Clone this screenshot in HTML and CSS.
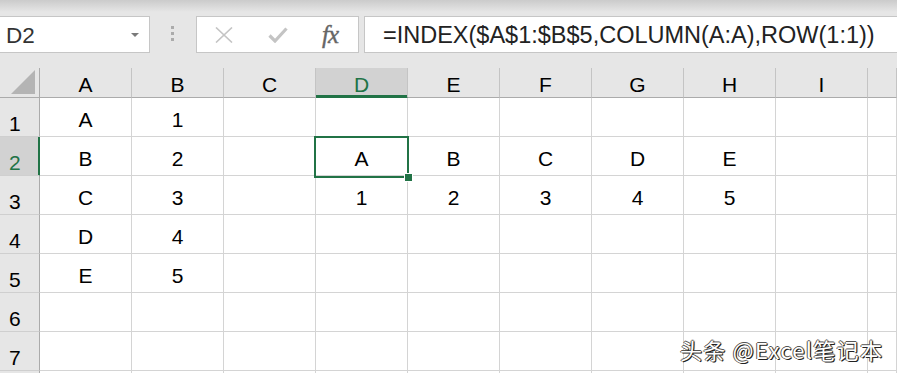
FILE: index.html
```
<!DOCTYPE html>
<html lang="zh-CN">
<head>
    <meta charset="UTF-8">
    <title>Excel</title>
    <link rel="stylesheet" href="styles.css">
</head>
<body>
    <div class="bar">
        <div class="namebox">
            <span>D2</span>
            <svg class="drop" width="8" height="5" viewBox="0 0 8 5"><path d="M0 0H8L4 4Z" fill="#7a7a7a"/></svg>
        </div>
        <div class="grip"><i></i><i></i><i></i></div>
        <div class="fbtns">
            <svg class="ico-x" width="18" height="16" viewBox="0 0 18 16"><path d="M1 0.5L17 15.5M17 0.5L1 15.5" stroke="#c4c4c4" stroke-width="1.6" fill="none"/></svg>
            <svg class="ico-ok" width="20" height="16" viewBox="0 0 20 16"><path d="M1.5 8.5L7 14L18.5 1.5" stroke="#c4c4c4" stroke-width="3.2" fill="none"/></svg>
            <span class="fx">fx</span>
        </div>
        <div class="formula">=INDEX($A$1:$B$5,COLUMN(A:A),ROW(1:1))</div>
    </div>

    <div class="sheet">
        <div class="row head">
            <div class="corner"><svg width="24" height="24" viewBox="0 0 24 24"><path d="M24 0V24H0Z" fill="#b4b4b4"/></svg></div>
            <div class="ch">A</div><div class="ch">B</div><div class="ch">C</div>
            <div class="ch on">D</div><div class="ch">E</div><div class="ch">F</div>
            <div class="ch">G</div><div class="ch">H</div><div class="ch">I</div>
            <div class="ch last"></div>
        </div>
        <div class="row">
            <div class="rh">1</div>
            <div class="c">A</div><div class="c">1</div><div class="c"></div>
            <div class="c"></div><div class="c"></div><div class="c"></div>
            <div class="c"></div><div class="c"></div><div class="c"></div><div class="c last"></div>
        </div>
        <div class="row">
            <div class="rh on">2</div>
            <div class="c">B</div><div class="c">2</div><div class="c"></div>
            <div class="c sel">A<span class="box"><span class="handle"></span></span></div>
            <div class="c">B</div><div class="c">C</div>
            <div class="c">D</div><div class="c">E</div><div class="c"></div><div class="c last"></div>
        </div>
        <div class="row">
            <div class="rh">3</div>
            <div class="c">C</div><div class="c">3</div><div class="c"></div>
            <div class="c">1</div><div class="c">2</div><div class="c">3</div>
            <div class="c">4</div><div class="c">5</div><div class="c"></div><div class="c last"></div>
        </div>
        <div class="row">
            <div class="rh">4</div>
            <div class="c">D</div><div class="c">4</div><div class="c"></div>
            <div class="c"></div><div class="c"></div><div class="c"></div>
            <div class="c"></div><div class="c"></div><div class="c"></div><div class="c last"></div>
        </div>
        <div class="row">
            <div class="rh">5</div>
            <div class="c">E</div><div class="c">5</div><div class="c"></div>
            <div class="c"></div><div class="c"></div><div class="c"></div>
            <div class="c"></div><div class="c"></div><div class="c"></div><div class="c last"></div>
        </div>
        <div class="row">
            <div class="rh">6</div>
            <div class="c"></div><div class="c"></div><div class="c"></div>
            <div class="c"></div><div class="c"></div><div class="c"></div>
            <div class="c"></div><div class="c"></div><div class="c"></div><div class="c last"></div>
        </div>
        <div class="row">
            <div class="rh">7</div>
            <div class="c"></div><div class="c"></div><div class="c"></div>
            <div class="c"></div><div class="c"></div><div class="c"></div>
            <div class="c"></div><div class="c"></div><div class="c"></div><div class="c last"></div>
        </div>
        <div class="row tail">
            <div class="rh"></div>
            <div class="c"></div><div class="c"></div><div class="c"></div>
            <div class="c"></div><div class="c"></div><div class="c"></div>
            <div class="c"></div><div class="c"></div><div class="c"></div><div class="c last"></div>
        </div>
    </div>

    <div class="mark">头条 @Excel笔记本</div>
</body>
</html>
```

FILE: styles.css
```
*{
    box-sizing: border-box;
}
html, body{
    margin: 0;
    height: 100%;
    overflow: hidden;
}
body{
    position: relative;
    background: #fff;
    font-family: "Liberation Sans", Arial, sans-serif;
    font-size: 21px;
    color: #000;
}

/* formula bar */
.bar{
    display: flex;
    align-items: flex-start;
    height: 68px;
    padding-top: 16px;
    background: linear-gradient(#cbcbcb, #e6e6e6 12px);
    background-color: #e6e6e6;
}
.namebox{
    display: flex;
    align-items: center;
    justify-content: space-between;
    width: 150px;
    height: 37px;
    padding: 0 10px 0 6px;
    background: #fff;
    border: 1px solid #c6c6c6;
    border-left: none;
    color: #333;
    font-size: 22.5px;
    line-height: 24px;
}
.namebox span{
    padding-top: 2px;
}
.drop{
    margin-top: 2px;
}
.grip{
    display: flex;
    flex-direction: column;
    gap: 3px;
    margin: 10px 22px 0 21px;
}
.grip i{
    display: block;
    width: 3px;
    height: 3px;
    background: #ababab;
}
.fbtns{
    display: flex;
    align-items: center;
    width: 163px;
    height: 37px;
    padding-left: 18px;
    background: #fff;
    border: 1px solid #c6c6c6;
}
.ico-ok{
    margin-left: 35px;
}
.fx{
    margin-left: 34px;
    font-family: "Liberation Serif", "Times New Roman", serif;
    font-style: italic;
    font-size: 25px;
    color: #666;
    letter-spacing: -1px;
    -webkit-text-stroke: 0.4px #666;
}
.formula{
    flex: 1;
    height: 37px;
    margin-left: 5px;
    padding: 2px 0 0 18px;
    background: #fff;
    border: 1px solid #c6c6c6;
    border-right: none;
    color: #222;
    font-size: 23.5px;
    line-height: 33px;
    white-space: nowrap;
}

/* grid */
.row{
    display: flex;
    height: 39px;
}
.row.head{
    height: 30px;
    background: #e6e6e6;
}
.corner{
    display: flex;
    align-items: flex-end;
    justify-content: flex-end;
    width: 40px;
    padding: 0 4px 3px 0;
    border-right: 1px solid #ababab;
    border-bottom: 1px solid #ababab;
}
.ch{
    display: flex;
    align-items: flex-end;
    justify-content: center;
    width: 92px;
    flex: none;
    line-height: 24px;
    border-right: 1px solid #c4c4c4;
    border-bottom: 1px solid #ababab;
}
.ch.on{
    background: #d2d2d2;
    color: #217346;
    border-bottom-color: #217346;
    box-shadow: inset 0 -2px 0 #217346;
}
.rh{
    display: flex;
    align-items: flex-end;
    width: 40px;
    flex: none;
    padding-left: 9px;
    line-height: 24px;
    background: #e6e6e6;
    border-right: 1px solid #ababab;
    border-bottom: 1px solid #cfcfcf;
}
.rh.on{
    background: #d2d2d2;
    color: #217346;
    border-right-color: #217346;
    box-shadow: inset -1px 0 0 #217346;
}
.c{
    display: flex;
    align-items: flex-end;
    justify-content: center;
    width: 92px;
    flex: none;
    padding-bottom: 4px;
    line-height: 24px;
    border-right: 1px solid #d4d4d4;
    border-bottom: 1px solid #d4d4d4;
}
.last{
    width: 29px;
}
.sel{
    position: relative;
}
.box{
    position: absolute;
    left: -2px;
    top: -1px;
    width: 95px;
    height: 42px;
    border: 2px solid #217346;
}
.handle{
    position: absolute;
    right: -6px;
    bottom: -6px;
    width: 9px;
    height: 9px;
    background: #217346;
    border: 1px solid #fff;
}

.mark{
    position: absolute;
    left: 680px;
    top: 333px;
    font-family: "Noto Sans CJK SC", sans-serif;
    font-size: 22px;
    letter-spacing: 1.3px;
    color: #fff;
    text-shadow: 1px 1px 0 #222, -1px 0 0 #555, 0 -1px 0 #555, 1px 0 1px #222;
    white-space: nowrap;
}
```
